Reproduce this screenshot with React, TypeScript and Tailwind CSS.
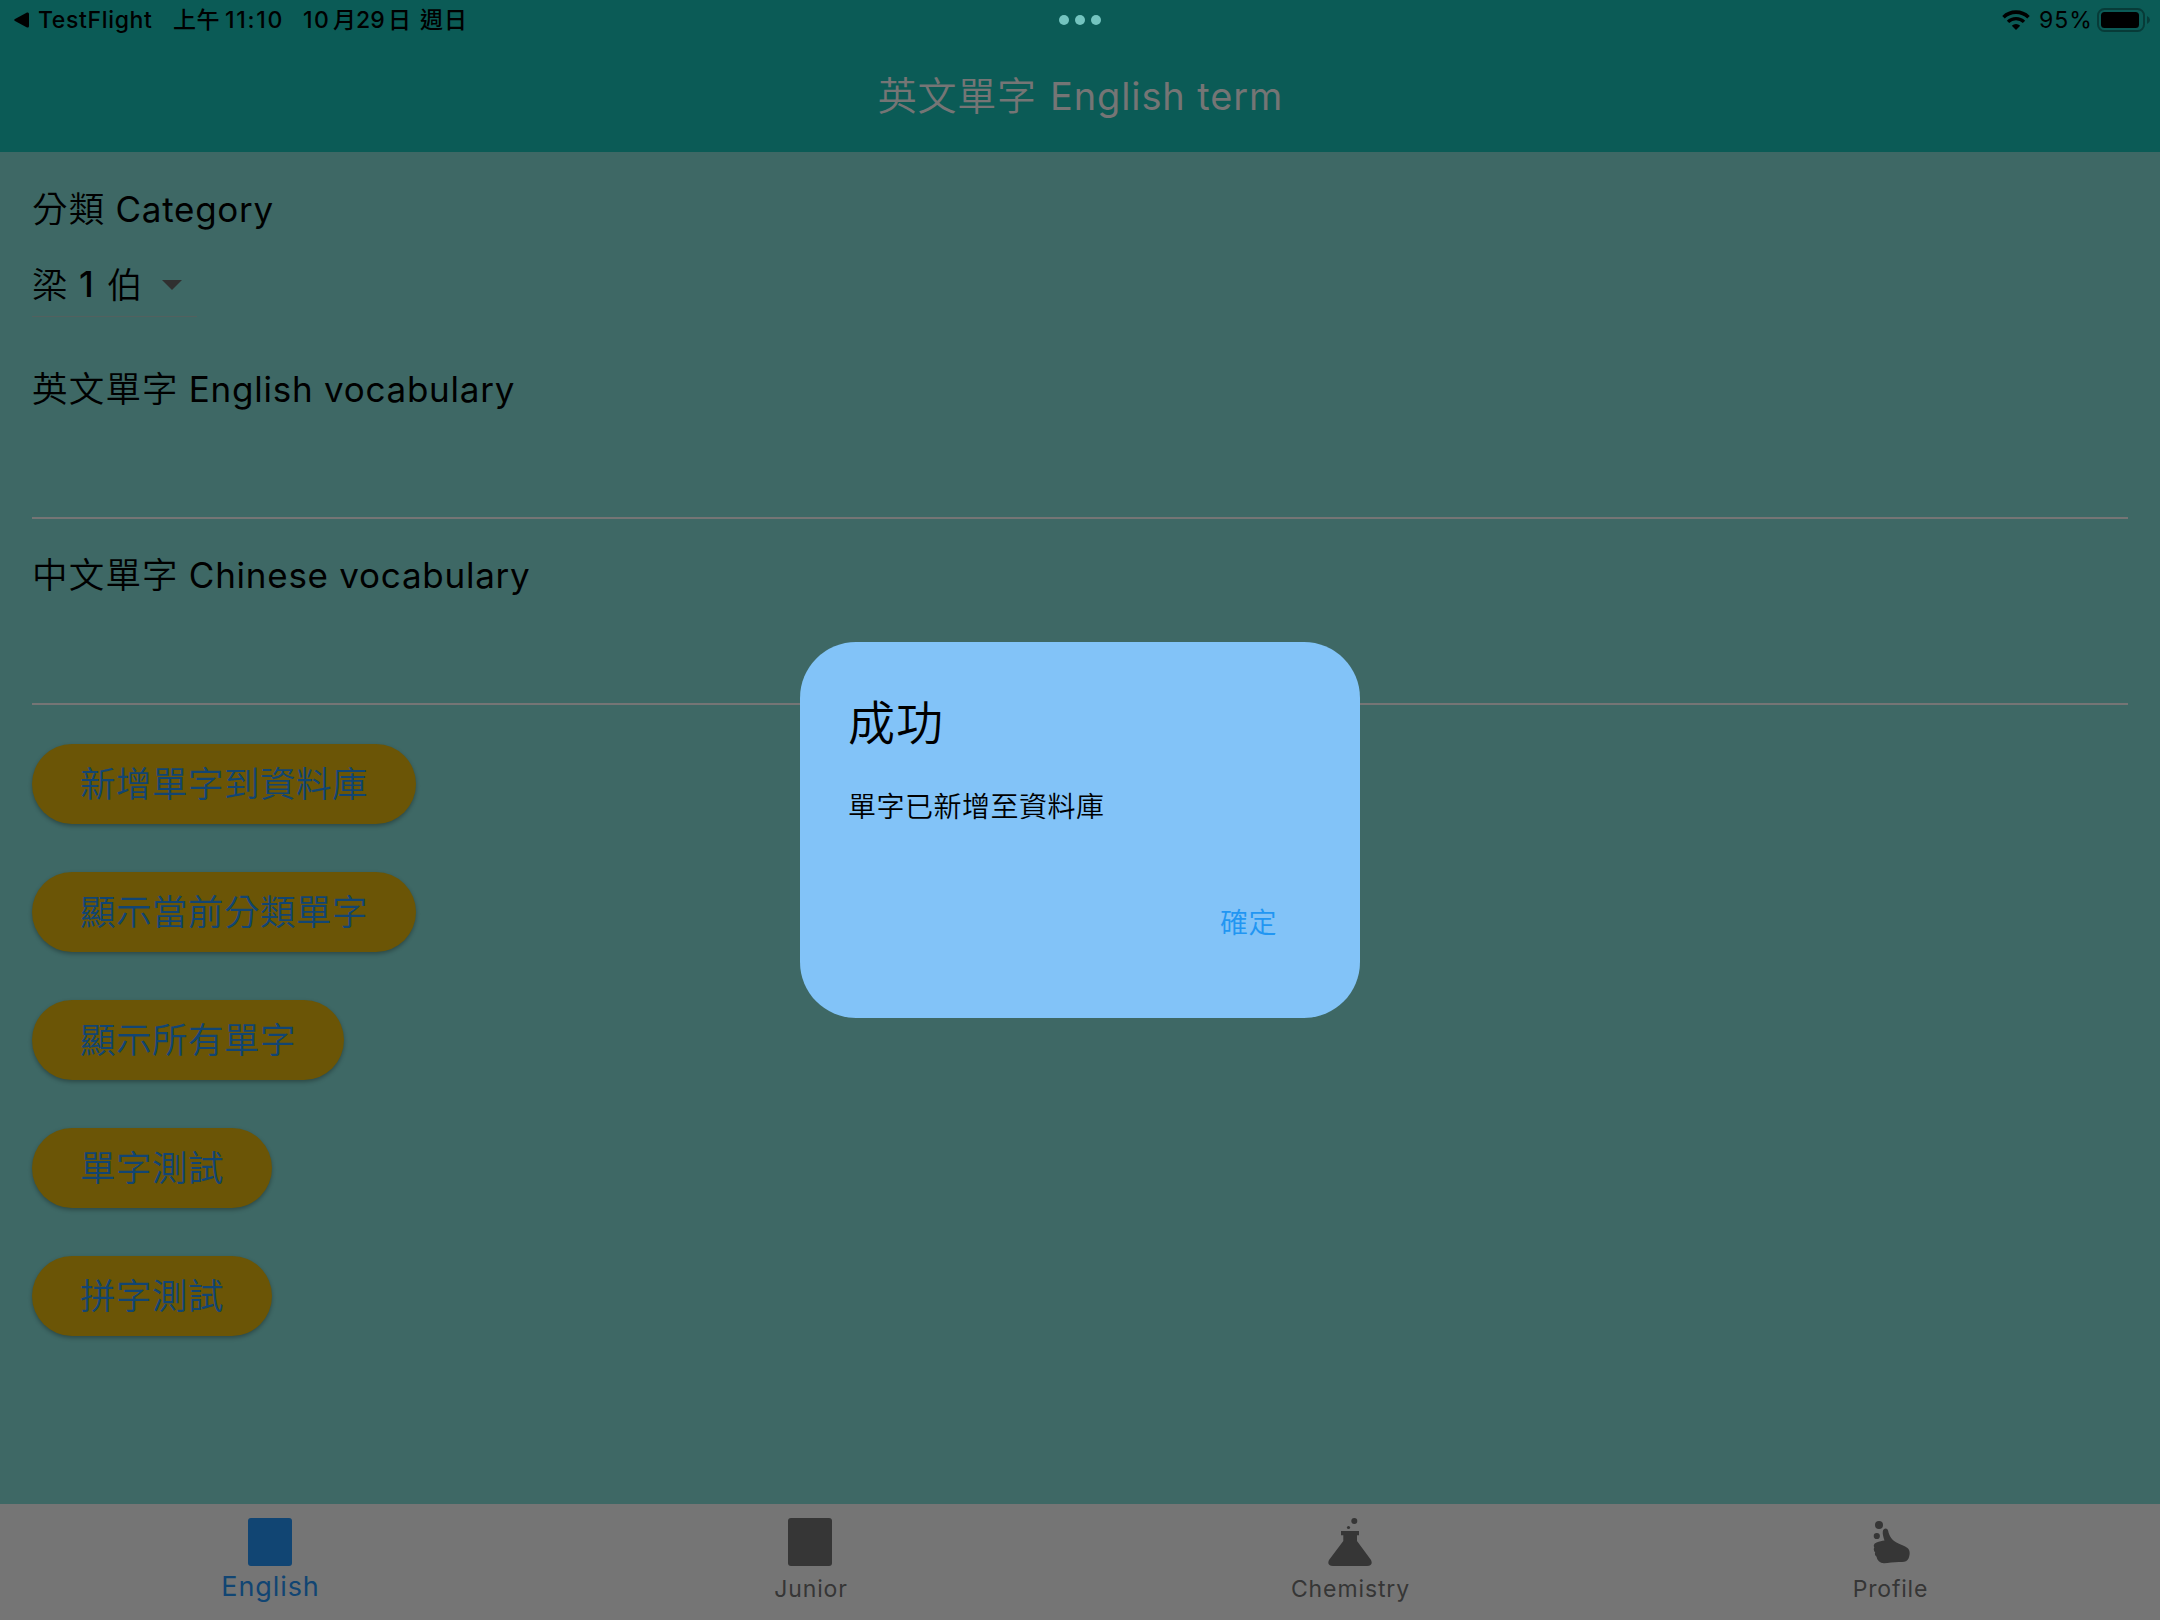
import React from "react";

const SANS = "font-['Inter','Noto_Sans_CJK_TC',sans-serif]";

function StatusBar() {
  return (
    <div className="relative flex h-10 items-center justify-between text-black">
      <div className="flex items-center whitespace-pre pl-[14px] text-[23px] font-medium leading-[40px]">
        <svg className="h-[16px] w-[15px]" viewBox="0 0 15 16">
          <path d="M1 7 L13 .6 Q15 0 15 2 V14 Q15 16 13 15.4 L1 9 Q-.6 8 1 7Z" />
        </svg>
        <span className="ml-[9px] w-[135px] tracking-[0.650px]">TestFlight</span>
        <span className="w-[52px] tracking-[0.500px]">上午</span>
        <span className="w-[78px] tracking-[1.700px]">11:10</span>
        <span className="w-[30px] tracking-[1.500px]">10</span>
        <span className="w-[23px]">月</span>
        <span className="w-[32px]">29</span>
        <span className="w-[32px]">日</span>
        <span className="tracking-[1px]">週日</span>
      </div>
      <div className="absolute left-1/2 top-[15px] flex -translate-x-1/2 gap-[6px]">
        <i className="size-[10px] rounded-full bg-[#74c4bf]" />
        <i className="size-[10px] rounded-full bg-[#74c4bf]" />
        <i className="size-[10px] rounded-full bg-[#74c4bf]" />
      </div>
      <div className="flex items-center pr-[9px]">
        <svg className="h-[20px] w-[28px]" viewBox="0 0 28 20" fill="none" stroke="#000">
          <path d="M1.5 7.2 A18 18 0 0 1 26.500 7.2" strokeWidth="3.6" />
          <path d="M6 11.9 A11.500 11.500 0 0 1 22 11.900" strokeWidth="3.4" />
          <path d="M14 20 L9.800 15.700 A6.200 6.200 0 0 1 18.200 15.700Z" fill="#000" stroke="none" />
        </svg>
        <span className="ml-[9px] w-[58px] text-[23px] leading-[40px] tracking-[1px]">95%</span>
        <svg className="h-[24px] w-[54px]" viewBox="0 0 54 24">
          <rect x="1" y="1" width="46" height="22" rx="6.500" fill="none" stroke="#073b38" strokeWidth="2" />
          <rect x="4" y="4" width="38" height="16" rx="3.500" />
          <path d="M50 8 Q53 9.500 53 12 Q53 14.500 50 16Z" fill="#073b38" />
        </svg>
      </div>
    </div>
  );
}

function Label({ zh, en }: { zh: string; en: string }) {
  return (
    <div className="flex h-[44px] items-start whitespace-pre text-[35px] leading-[44px] text-black">
      <span className="pt-px text-[35.5px] font-[350] tracking-[1.200px]">{zh}</span>
      <span className="ml-[10px] font-normal tracking-[0.750px]">{en}</span>
    </div>
  );
}

function ActionButton({ children }: { children: React.ReactNode }) {
  return (
    <button className="flex h-20 items-center rounded-full bg-[#6b5506] px-12 pt-[2px] text-[35.5px] font-[350] leading-[44px] tracking-[0.500px] text-[#114573] shadow-[0_2px_4px_rgba(0,0,0,0.3)]">
      {children}
    </button>
  );
}

function BookIcon() {
  return (
    <svg className="h-[48px] w-[44px]" viewBox="0 0 44 48" fill="currentColor">
      <rect width="44" height="48" rx="3" />
    </svg>
  );
}

function FlaskIcon() {
  return (
    <svg className="h-[48px] w-[44px]" viewBox="0 0 44 48" fill="currentColor">
      <circle cx="26.300" cy="3" r="3" />
      <circle cx="20.500" cy="9.500" r="1.600" />
      <path d="M13 13 H31 V17.300 H29 V23 L43 42 Q45.500 48 39 48 H5 Q-1.500 48 1 42 L15.300 23 V17.300 H13Z" />
    </svg>
  );
}

function ThumbIcon() {
  return (
    <svg className="h-[48px] w-[44px]" viewBox="0 0 44 48" fill="currentColor">
      <circle cx="11" cy="7" r="4" />
      <circle cx="8.800" cy="18" r="3.100" />
      <path d="M14.800 13.500 C15.500 9.600 19.500 9.800 20.200 13 C21 17.500 24 22 28 24.300 C33 27 36.500 27.500 39.500 30 C42.500 32.500 42 37 40.500 40.500 C39.500 43 37 44 34 44 C28 43.600 21 44.500 16 45.300 C12 45 9 42 8.600 38.700 C7 37.500 6.500 36 7.200 34.500 C5.600 33 5.400 30.500 6.300 29.500 C5 27 6.500 25.500 8.500 24.500 C11.500 23.500 14 22.500 16.500 22.500 C15.500 19.500 14.400 16 14.800 13.500Z" />
    </svg>
  );
}

export default function App() {
  return (
    <div className={`relative flex h-[1620px] w-[2160px] flex-col overflow-hidden bg-[#3e6865] ${SANS}`}>
      <header className="h-[152px] bg-[#0b5b56]">
        <StatusBar />
        <h1 className="flex h-[112px] justify-center whitespace-pre pl-px text-[38px] leading-[112px] text-[#757575]">
          <span className="text-[39px] font-[350] tracking-[0.800px]">英文單字</span>
          <span className="ml-[13px] font-normal tracking-[0.900px]">English term</span>
        </h1>
      </header>

      <main className="flex flex-1 flex-col px-8">
        <div className="pt-[35px]">
          <Label zh="分類" en="Category" />
        </div>
        <div className="mt-[21px] flex h-[65px] w-[165px] border-b border-[#52605e] pt-[11px] text-[35.5px] leading-[44px] text-black">
          <span className="w-[47px] pt-px font-[350]">梁</span>
          <span className="w-[28px] font-medium">1</span>
          <span className="w-[55px] pt-px font-[350]">伯</span>
          <svg className="mt-[17px] h-[10px] w-[20px]" viewBox="0 0 20 10">
            <path d="M0 0H20L10 10Z" fill="#303030" />
          </svg>
        </div>
        <div className="mt-[50px] h-[152px] border-b-2 border-[#757575]">
          <Label zh="英文單字" en="English vocabulary" />
        </div>
        <div className="mt-[34px] h-[152px] border-b-2 border-[#757575]">
          <Label zh="中文單字" en="Chinese vocabulary" />
        </div>
        <div className="mt-[39px] flex flex-col items-start gap-12">
          <ActionButton>新增單字到資料庫</ActionButton>
          <ActionButton>顯示當前分類單字</ActionButton>
          <ActionButton>顯示所有單字</ActionButton>
          <ActionButton>單字測試</ActionButton>
          <ActionButton>拼字測試</ActionButton>
        </div>
      </main>

      <nav className="grid h-[116px] grid-cols-4 bg-[#757575] pt-[14px] text-[#363636]">
        <div className="flex flex-col items-center text-[#114573]">
          <BookIcon />
          <span className="mt-[3px] pl-px text-[27px] font-normal leading-[36px] tracking-[0.900px]">English</span>
        </div>
        <div className="flex flex-col items-center">
          <BookIcon />
          <span className="mt-[5px] pl-[2px] text-[23px] font-normal leading-[36px] tracking-[0.900px]">Junior</span>
        </div>
        <div className="flex flex-col items-center">
          <FlaskIcon />
          <span className="mt-[5px] pl-px text-[23px] font-normal leading-[36px] tracking-[0.900px]">Chemistry</span>
        </div>
        <div className="flex flex-col items-center">
          <ThumbIcon />
          <span className="mt-[5px] pl-px text-[23px] font-normal leading-[36px] tracking-[0.800px]">Profile</span>
        </div>
      </nav>

      <div role="dialog" className="absolute left-[800px] top-[642px] flex h-[376px] w-[560px] flex-col rounded-[56px] bg-[#82c3f8] px-12 text-black">
        <h2 className="mt-[51px] text-[47px] font-[350] leading-[60px] tracking-[1px]">成功</h2>
        <p className="mt-[36px] text-[28px] font-[350] leading-[36px] tracking-[0.500px]">單字已新增至資料庫</p>
        <button className="mr-[35px] mt-[80px] self-end text-[28px] font-[350] leading-[36px] tracking-[0.500px] text-[#2196f3]">確定</button>
      </div>
    </div>
  );
}
